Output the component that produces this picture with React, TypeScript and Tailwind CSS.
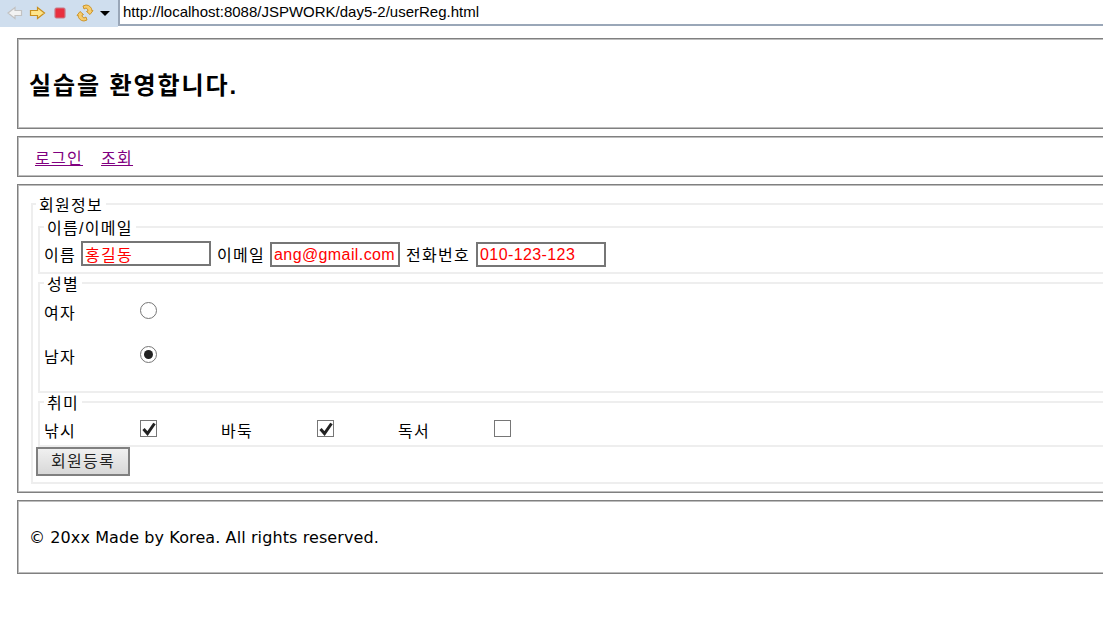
import React from "react";

const korean = "font-['Liberation_Sans','Noto_Sans_CJK_KR',sans-serif]";
const han = "tracking-[0.08em]";

const ToolbarIcons = () => (
  <div className="flex h-[27px] w-[118px] shrink-0 items-center bg-[#cfdeee] pb-[1px] pl-[6px]">
    <svg width="110" height="22" viewBox="0 0 110 22">
      <path d="M2 11 L9 5.500 V8.500 H15.500 V13.500 H9 V16.500 Z" fill="#f2f2f2" stroke="#c2c2c2" strokeWidth="1.200" />
      <path d="M38.500 11 L31.500 5.500 V8.500 H24.500 V13.500 H31.500 V16.500 Z" fill="#fde58c" stroke="#c98f1e" strokeWidth="1.200" />
      <rect x="49" y="6" width="10" height="10" rx="1.500" fill="#e8303f" stroke="#c77a86" strokeWidth="1.200" />
      <path d="M72 13 a6 6 0 0 0 6 6 l3 -1 -1 -3 -2 1 a3 3 0 0 1 -2 -3 l1.500 -.5 -3.500 -3 -3 4 z" fill="#f7cc6c" stroke="#c98f1e" strokeWidth=".9" />
      <path d="M86 9 a6 6 0 0 0 -6 -6 l-3 1 1 3 2 -1 a3 3 0 0 1 2 3 l-1.500 .5 3.500 3 3 -4 z" fill="#f7cc6c" stroke="#c98f1e" strokeWidth=".9" />
      <path d="M94 9 H104 L99 14 Z" fill="#000" />
    </svg>
  </div>
);

const Box = ({ className, children }: { className: string; children: React.ReactNode }) => (
  <div className={`w-[1200px] border border-[#808080] shadow-[inset_0_0_0_1px_#bdbdbd] ${className}`}>
    {children}
  </div>
);

const Group = ({ title, className, children }: { title: string; className: string; children: React.ReactNode }) => (
  <fieldset className={`border-2 border-[#eeeeee] ${className}`}>
    <legend className={`px-[3px] text-[16px] leading-[18px] text-black ${han}`}>
      <span className="relative top-[2px]">{title}</span>
    </legend>
    {children}
  </fieldset>
);

const TextBox = ({ value, className }: { value: string; className: string }) => (
  <input
    readOnly
    value={value}
    className={`block h-[25px] w-[130px] border-2 border-[#767676] bg-white pl-[2px] text-[16px] text-[#ff0000] outline-none ${className}`}
  />
);

const Radio = ({ checked }: { checked?: boolean }) => (
  <span className="flex h-[17px] w-[17px] items-center justify-center rounded-full border-[1.500px] border-[#767676] bg-white">
    {checked && <span className="h-[9px] w-[9px] rounded-full bg-[#222222]" />}
  </span>
);

const Check = ({ checked }: { checked?: boolean }) => (
  <span className="flex h-[17px] w-[17px] items-center justify-center border-[1.500px] border-[#767676] bg-white">
    {checked && (
      <svg width="14" height="14" viewBox="0 0 14 14">
        <path d="M1.500 7 L5.500 11.500 L12.500 1.500" fill="none" stroke="#222222" strokeWidth="3" />
      </svg>
    )}
  </span>
);

const App: React.FC = () => {
  return (
    <div className={`h-[641px] w-[1103px] overflow-hidden bg-white text-[16px] text-black ${korean}`}>
      <div className="flex h-[27px]">
        <ToolbarIcons />
        <div className="flex h-[26px] flex-1 items-center border-b-2 border-l-2 border-[#9aa7b8] pl-[3px] text-[15px] text-black">
          http://localhost:8088/JSPWORK/day5-2/userReg.html
        </div>
      </div>

      <div className="ml-[17px] mt-[11px] flex flex-col gap-[7px]">
        <Box className="h-[91px] pl-[11px] pt-[31px]">
          <h1 className={`text-[24px] font-bold leading-[32px] ${han}`}>실습을 환영합니다.</h1>
        </Box>

        <Box className="flex h-[41px] items-center gap-[18px] pl-[17px] pt-[4px]">
          <a href="#" className={`text-[16px] text-[#800080] underline ${han}`}>로그인</a>
          <a href="#" className={`text-[16px] text-[#800080] underline ${han}`}>조회</a>
        </Box>

        <Box className="h-[309px] pl-[13px] pt-[10px]">
          <Group title="회원정보" className="h-[289px] pl-[3px]">
            <Group title="이름/이메일" className="ml-[2px] mt-[5px] h-[56px] pl-[4px]">
              <div className="mt-[5px] flex h-[27px] items-center">
                <span className={`pt-[2px] ${han}`}>이름</span>
                <span className="mb-[2px] ml-[5px]"><TextBox value="홍길동" className={han} /></span>
                <span className={`ml-[6px] pt-[2px] ${han}`}>이메일</span>
                <span className="ml-[5px]"><TextBox value="ang@gmail.com" className="tracking-[0.4px]" /></span>
                <span className={`ml-[6px] pt-[2px] ${han}`}>전화번호</span>
                <span className="ml-[6px]"><TextBox value="010-123-123" className="tracking-[0.4px]" /></span>
              </div>
            </Group>
            <Group title="성별" className="ml-[2px] h-[119px] pl-[4px]">
              <div className="mt-[10px] flex flex-col gap-[27px]">
                <div className="flex h-[17px] items-center">
                  <span className={`w-[96px] pt-[6px] ${han}`}>여자</span>
                  <Radio />
                </div>
                <div className="flex h-[17px] items-center">
                  <span className={`w-[96px] pt-[6px] ${han}`}>남자</span>
                  <Radio checked />
                </div>
              </div>
            </Group>
            <Group title="취미" className="ml-[2px] h-[54px] pl-[4px]">
              <div className="mt-[9px] flex h-[17px] items-center">
                <span className={`w-[96px] pt-[6px] ${han}`}>낚시</span>
                <Check checked />
                <span className={`ml-[64px] w-[96px] pt-[6px] ${han}`}>바둑</span>
                <Check checked />
                <span className={`ml-[64px] w-[96px] pt-[6px] ${han}`}>독서</span>
                <Check />
              </div>
            </Group>
            <button className={`block h-[29px] w-[94px] border-2 border-[#808080] bg-gradient-to-b from-[#f0f0f0] to-[#d8d8d8] text-[16px] text-[#222222] ${han}`}>
              회원등록
            </button>
          </Group>
        </Box>

        <Box className="h-[74px] pl-[11px] pt-[27px]">
          <p className="font-['DejaVu_Sans',sans-serif] text-[16px] leading-[20px] tracking-[0.1px]">© 20xx Made by Korea. All rights reserved.</p>
        </Box>
      </div>
    </div>
  );
};

export default App;
